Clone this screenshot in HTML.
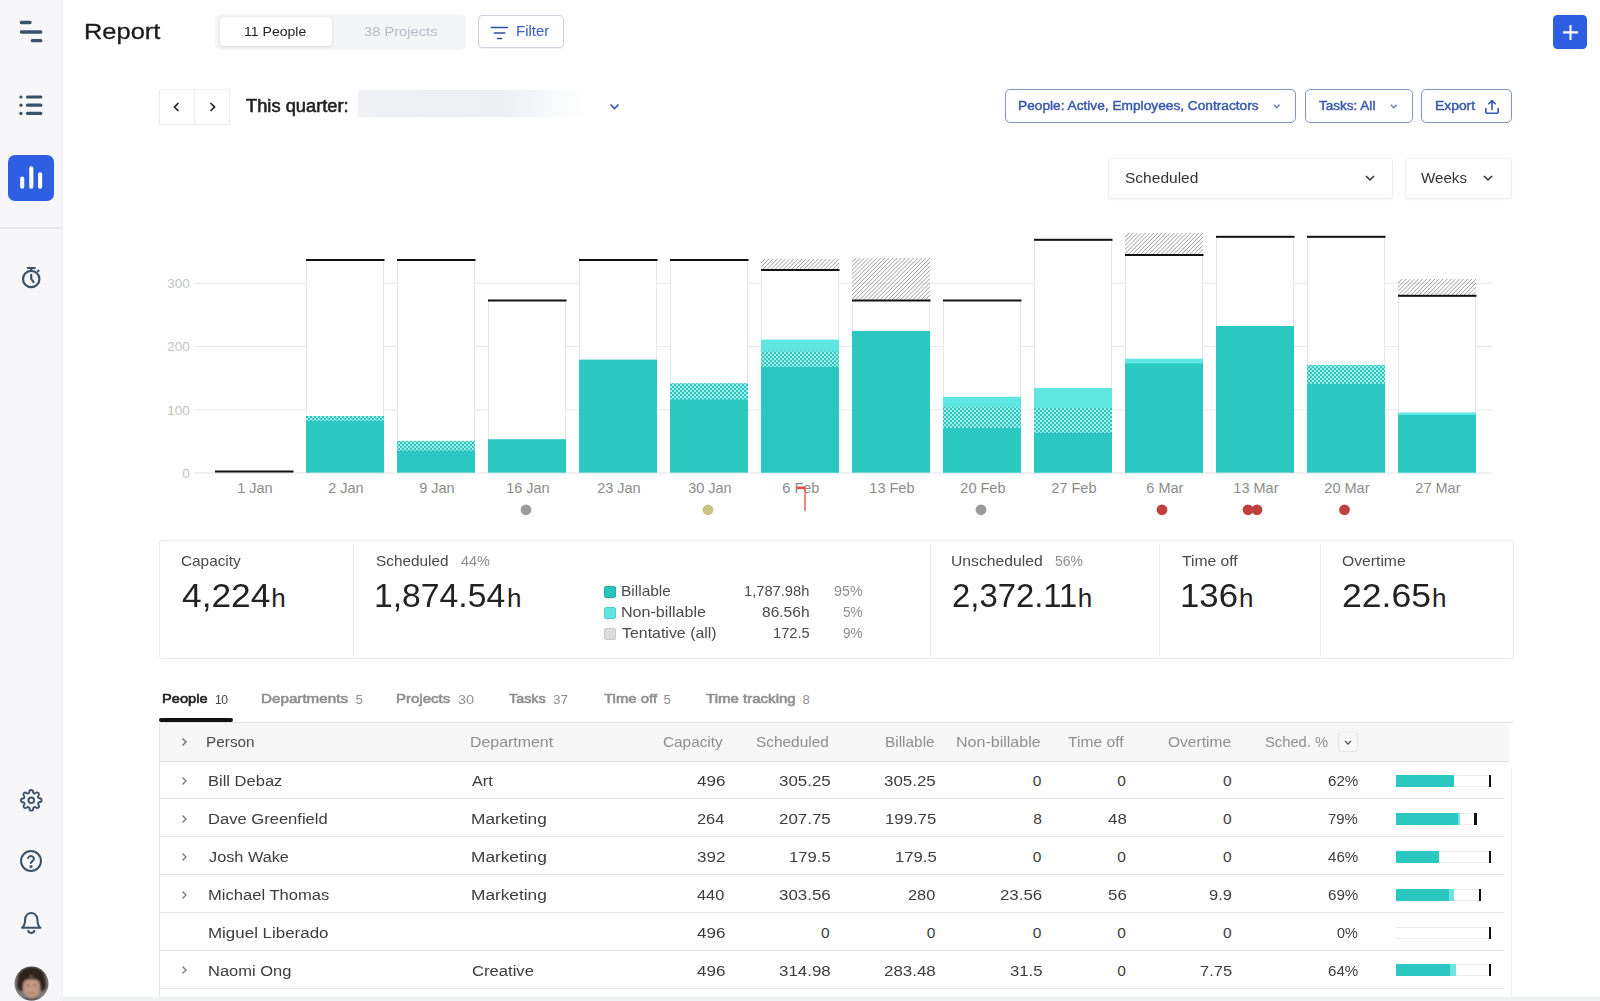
<!DOCTYPE html>
<html><head><meta charset="utf-8"><title>Report</title>
<style>
*{box-sizing:border-box;margin:0;padding:0}
html,body{width:1600px;height:1001px;overflow:hidden;background:#fff;font-family:"Liberation Sans",sans-serif;color:#222}
.abs{position:absolute}
.t{position:absolute;white-space:nowrap;font-family:"Liberation Sans",sans-serif}
#side{position:absolute;left:0;top:0;width:63px;height:1001px;background:#f7f7fa;border-right:1px solid #f0f1f3}
#side svg{position:absolute}
#bottom{position:absolute;left:62px;top:997px;width:1538px;height:4px;background:#f1f2f4}
.seg{position:absolute;left:215px;top:13.5px;width:251px;height:36.5px;background:#f4f5f7;border-radius:6px}
.seg .on{position:absolute;left:4.5px;top:3.5px;width:112px;height:29px;background:#fff;border-radius:4px;box-shadow:0 1px 3px rgba(0,0,0,.13)}
.btn{position:absolute;border:1px solid #8496c4;border-radius:5px;background:#fff}
.chart{position:absolute;left:0;top:220px}
.yl{font-size:13.5px;fill:#c2c2c2;font-family:"Liberation Sans",sans-serif}
.xl{font-size:14.5px;fill:#8c8c8c;font-family:"Liberation Sans",sans-serif}
.cards{position:absolute;left:159px;top:540px;width:1354.5px;height:118.5px;border:1px solid #e9e9e9;border-radius:3px;background:#fff}
.cards .dv{position:absolute;top:3px;width:1px;height:113px;background:#e9e9e9}
.sq{position:absolute;left:604px;width:12px;height:12px;border-radius:2px}
.thead{position:absolute;left:159px;top:722px;width:1350px;height:40px;background:#f7f7f7;border-top:1px solid #e2e2e2;border-bottom:1px solid #e2e2e2}
.rl{position:absolute;left:159px;width:1345px;height:1px;background:#e6e6e6}
.rchev{position:absolute;left:181px}
.pbar{position:absolute;left:1396px;height:12px;border-top:1px solid #ececec;border-bottom:1px solid #ececec}
.pbar i{position:absolute;top:-1px;height:12px;display:block}
.pbar .b{left:0;background:#2bc8c2}
.pbar .l{background:#6fe3de}
.pbar .m{width:2.4px;background:#111}
.tbl-l{position:absolute;left:159px;top:723px;width:1px;height:274px;background:#e8e8e8}
.tbl-r{position:absolute;left:1511px;top:768px;width:1px;height:229px;background:#efefef}
</style></head><body>
<div id="side">
<!-- logo -->
<svg style="left:19px;top:20px" width="26" height="24" viewBox="0 0 26 24"><g stroke="#3b5168" stroke-width="3.300" stroke-linecap="round"><path d="M2.400 2.500H11"/><path d="M2.400 12H21.800"/><path d="M13.300 20.700H21.800"/></g></svg>
<!-- list -->
<svg style="left:19px;top:93.800px" width="25" height="22" viewBox="0 0 25 22"><g stroke="#3b5168" stroke-width="3.200" stroke-linecap="round"><path d="M8.500 3H21.800"/><path d="M8.500 11.200H21.800"/><path d="M8.500 19.400H21.800"/><path d="M1.900 3H2"/><path d="M1.900 11.200H2"/><path d="M1.900 19.400H2"/></g></svg>
<!-- active -->
<div class="abs" style="left:8px;top:155px;width:46px;height:46px;border-radius:7px;background:#2e5fe2"></div>
<svg style="left:19px;top:165px" width="24" height="26" viewBox="0 0 24 26"><g stroke="#fff" stroke-width="4.100" stroke-linecap="round"><path d="M3.200 13.500V21.800"/><path d="M12.300 3.300V21.800"/><path d="M21.100 9.200V21.800"/></g></svg>
<div class="abs" style="left:0;top:227px;width:63px;height:2px;background:linear-gradient(#e3e5e8,#eceef0)"></div>
<!-- timer -->
<svg style="left:20px;top:266px" width="24" height="25" viewBox="0 0 24 25"><g fill="none" stroke="#3b5168" stroke-width="2.200" stroke-linecap="round"><circle cx="11.200" cy="13" r="8.200"/><path d="M7.800 2H14.800"/><path d="M11.200 2.500V4.500"/><path d="M17.900 5.300L18.500 4.700"/><path d="M11.200 8.800V13L13.600 16.200"/></g></svg>
<!-- gear -->
<svg style="left:20px;top:789px" width="22.500" height="22.500" viewBox="0 0 24 24" fill="none" stroke="#3b5168" stroke-width="2" stroke-linecap="round" stroke-linejoin="round"><circle cx="12" cy="12" r="3"/><path d="M19.4 15a1.65 1.65 0 0 0 .33 1.82l.06.06a2 2 0 1 1-2.83 2.83l-.06-.06a1.65 1.65 0 0 0-1.82-.33 1.65 1.65 0 0 0-1 1.51V21a2 2 0 0 1-4 0v-.09a1.65 1.65 0 0 0-1-1.51 1.65 1.65 0 0 0-1.82.33l-.06.06a2 2 0 1 1-2.83-2.83l.06-.06a1.65 1.65 0 0 0 .33-1.82 1.65 1.65 0 0 0-1.51-1H3a2 2 0 0 1 0-4h.09a1.65 1.65 0 0 0 1.51-1 1.65 1.65 0 0 0-.33-1.82l-.06-.06a2 2 0 1 1 2.83-2.83l.06.06a1.65 1.65 0 0 0 1.82.33h0a1.65 1.65 0 0 0 1-1.51V3a2 2 0 0 1 4 0v.09a1.65 1.65 0 0 0 1 1.51h0a1.65 1.65 0 0 0 1.82-.33l.06-.06a2 2 0 1 1 2.83 2.83l-.06.06a1.65 1.65 0 0 0-.33 1.82v0a1.65 1.65 0 0 0 1.510 1H21a2 2 0 0 1 0 4h-.09a1.65 1.65 0 0 0-1.510 1z"/></svg>
<!-- help -->
<svg style="left:19px;top:849px" width="24" height="24" viewBox="0 0 24 24" fill="none" stroke="#3b5168" stroke-width="2" stroke-linecap="round" stroke-linejoin="round"><circle cx="12" cy="12" r="10"/><path d="M9.1 9a3 3 0 0 1 5.8 1c0 2-3 2.6-3 4"/><circle cx="12" cy="17.6" r=".6" fill="#3b5168"/></svg>
<!-- bell -->
<svg style="left:18px;top:909.500px" width="26.500" height="25.500" viewBox="0 0 24 25" fill="none" stroke="#3b5168" stroke-width="2" stroke-linecap="round" stroke-linejoin="round"><path d="M18 9A6 6 0 0 0 6 9c0 6-3 8.500-3 8.500h18S18 15 18 9z"/><path d="M9 20.500a3.200 3.200 0 0 0 6 0"/></svg>
<!-- avatar -->
<svg style="left:14px;top:966px" width="35" height="35" viewBox="0 0 35 35"><defs><clipPath id="av"><circle cx="17.500" cy="17.500" r="17"/></clipPath></defs><filter id="bl"><feGaussianBlur stdDeviation="0.9"/></filter><g clip-path="url(#av)"><rect width="35" height="35" fill="#7f7c79"/><g filter="url(#bl)"><ellipse cx="17.500" cy="12" rx="13.500" ry="11" fill="#2e221c"/><ellipse cx="7" cy="18" rx="4" ry="7" fill="#2e221c"/><ellipse cx="28" cy="18" rx="4" ry="7" fill="#2e221c"/><ellipse cx="17.500" cy="21" rx="8.500" ry="11" fill="#c49a84"/><path d="M9 16Q12 9 17.500 11Q23 9 26 16Q22 12.500 17.500 13.500Q13 12.500 9 16z" fill="#2e221c"/><ellipse cx="14" cy="19.500" rx="1.300" ry=".8" fill="#3a2a22"/><ellipse cx="21" cy="19.500" rx="1.300" ry=".8" fill="#3a2a22"/><path d="M14 27Q17.500 28.500 21 27" stroke="#8a5a4a" stroke-width="1" fill="none"/><rect x="0" y="32" width="35" height="4" fill="#555"/></g></g></svg>
</div>
<div id="bottom"></div>

<div class="seg"><div class="on"></div></div>
<div class="btn" style="left:477.500px;top:15px;width:86.500px;height:32.500px;border-color:#cbcfd8;border-radius:4px;box-shadow:0 1px 1px rgba(0,0,0,.05)"><svg class="abs" style="left:11px;top:9.500px" width="19" height="15" viewBox="0 0 19 15"><g stroke="#2f4d9f" stroke-width="1.500" stroke-linecap="round"><path d="M1.300 1.500H17.500"/><path d="M4.300 7H14.800"/><path d="M7.500 12.500H11.600"/></g></svg></div>
<div class="abs" style="left:1553.400px;top:15px;width:33.800px;height:33.800px;border-radius:4.500px;background:#2e5fe2"><svg class="abs" style="left:8.500px;top:8.500px" width="17" height="17" viewBox="0 0 17 17"><path d="M8.500 1V16M1 8.400H16" stroke="#fff" stroke-width="2.100" stroke-linecap="butt"/></svg></div>

<!-- row 2 -->
<div class="abs" style="left:159px;top:88.500px;width:71px;height:36.500px;border:1px solid #e9eaec;border-top-color:#f1f2f3;border-radius:2px;background:#fff"></div>
<div class="abs" style="left:193.500px;top:89px;width:1px;height:36px;background:#ebecee"></div>
<svg class="abs" style="left:171.500px;top:100.500px" width="9" height="12" viewBox="0 0 9 12"><path d="M6.500 2L2.500 6L6.500 10" fill="none" stroke="#222" stroke-width="1.700"/></svg>
<svg class="abs" style="left:208px;top:100.500px" width="9" height="12" viewBox="0 0 9 12"><path d="M2.500 2L6.500 6L2.500 10" fill="none" stroke="#222" stroke-width="1.700"/></svg>
<div class="abs" style="left:357.500px;top:90px;width:230px;height:26.500px;background:linear-gradient(90deg,#eff1f5 0,#edeff3 62%,#f4f5f8 76%,#fafbfc 88%,#fff 100%)"></div>
<svg class="abs" style="left:609px;top:103px" width="11" height="8" viewBox="0 0 11 8"><path d="M1.500 1.500L5.500 5.500L9.500 1.500" fill="none" stroke="#3558b8" stroke-width="1.700"/></svg>

<div class="btn" style="left:1004.500px;top:89px;width:291px;height:33.500px"><svg class="abs" style="left:267.500px;top:14px" width="7.500" height="5" viewBox="0 0 9 6"><path d="M1 1L4.500 4.500L8 1" fill="none" stroke="#6d7fa8" stroke-width="1.700"/></svg></div>
<div class="btn" style="left:1304.500px;top:89px;width:108px;height:33.500px"><svg class="abs" style="left:84px;top:14px" width="7.500" height="5" viewBox="0 0 9 6"><path d="M1 1L4.500 4.500L8 1" fill="none" stroke="#6d7fa8" stroke-width="1.700"/></svg></div>
<div class="btn" style="left:1421px;top:89px;width:90.500px;height:33.500px"><svg class="abs" style="left:61.500px;top:8.500px" width="16" height="16" viewBox="0 0 16 16"><g fill="none" stroke="#3558b8" stroke-width="1.600" stroke-linecap="round" stroke-linejoin="round"><path d="M8 10.500V1.800M4.800 4.800L8 1.600L11.200 4.800"/><path d="M1.800 9.500V12.500Q1.800 14.200 3.500 14.200H12.500Q14.200 14.200 14.200 12.500V9.500"/></g></svg></div>

<!-- selects -->
<div class="abs" style="left:1108px;top:158px;width:284.500px;height:40.500px;border:1px solid #eeeeee;border-top-color:#f4f4f4;border-radius:3px;background:#fff;box-shadow:0 1px 2px rgba(0,0,0,.04)"><svg class="abs" style="left:255.500px;top:16px" width="10" height="7" viewBox="0 0 10 7"><path d="M1 1L5 5L9 1" fill="none" stroke="#333" stroke-width="1.500"/></svg></div>
<div class="abs" style="left:1404.500px;top:158px;width:107px;height:40.500px;border:1px solid #eeeeee;border-top-color:#f4f4f4;border-radius:3px;background:#fff;box-shadow:0 1px 2px rgba(0,0,0,.04)"><svg class="abs" style="left:77.500px;top:16px" width="10" height="7" viewBox="0 0 10 7"><path d="M1 1L5 5L9 1" fill="none" stroke="#333" stroke-width="1.500"/></svg></div>

<svg class="chart" width="1600" height="320" viewBox="0 220 1600 320">
<defs>
<pattern id="hatch" width="2.9" height="2.9" patternUnits="userSpaceOnUse" patternTransform="rotate(-45)"><rect width="2.9" height="2.9" fill="#fff"/><rect width="2.9" height="0.85" fill="#939393"/></pattern>
<pattern id="chk" width="4" height="4" patternUnits="userSpaceOnUse"><rect width="4" height="4" fill="#2bc8c2"/><rect width="2" height="2" fill="#a4ebe7"/><rect x="2" y="2" width="2" height="2" fill="#a4ebe7"/></pattern>
</defs>
<line x1="194" x2="1492" y1="283.3" y2="283.3" stroke="#e9e9e9" stroke-width="1"/>
<text x="189.8" y="288.1" text-anchor="end" class="yl">300</text>
<line x1="194" x2="1492" y1="346.5" y2="346.5" stroke="#e9e9e9" stroke-width="1"/>
<text x="189.8" y="351.3" text-anchor="end" class="yl">200</text>
<line x1="194" x2="1492" y1="409.8" y2="409.8" stroke="#e9e9e9" stroke-width="1"/>
<text x="189.8" y="414.6" text-anchor="end" class="yl">100</text>
<line x1="194" x2="1492" y1="473" y2="473" stroke="#dde1e5" stroke-width="1"/>
<text x="189.8" y="477.8" text-anchor="end" class="yl">0</text>
<rect x="215.0" y="470.5" width="78.5" height="2" fill="#111"/>
<text x="254.9" y="492.9" text-anchor="middle" class="xl">1 Jan</text>
<rect x="306.5" y="260" width="77" height="212.60000000000002" fill="#fff" stroke="#e6e6e6" stroke-width="1"/>
<rect x="306.0" y="416" width="78" height="5.5" fill="url(#chk)"/>
<rect x="306.0" y="421" width="78" height="51.60000000000002" fill="#2bc8c2"/>
<rect x="306.0" y="259" width="78.5" height="2" fill="#111"/>
<text x="345.9" y="492.9" text-anchor="middle" class="xl">2 Jan</text>
<rect x="397.5" y="260" width="77" height="212.60000000000002" fill="#fff" stroke="#e6e6e6" stroke-width="1"/>
<rect x="397.0" y="440.8" width="78" height="10.5" fill="url(#chk)"/>
<rect x="397.0" y="450.8" width="78" height="21.80000000000001" fill="#2bc8c2"/>
<rect x="397.0" y="259" width="78.5" height="2" fill="#111"/>
<text x="436.9" y="492.9" text-anchor="middle" class="xl">9 Jan</text>
<rect x="488.5" y="300.5" width="77" height="172.10000000000002" fill="#fff" stroke="#e6e6e6" stroke-width="1"/>
<rect x="488.0" y="439.2" width="78" height="33.400000000000034" fill="#2bc8c2"/>
<rect x="488.0" y="299.5" width="78.5" height="2" fill="#111"/>
<text x="527.9" y="492.9" text-anchor="middle" class="xl">16 Jan</text>
<rect x="579.5" y="260" width="77" height="212.60000000000002" fill="#fff" stroke="#e6e6e6" stroke-width="1"/>
<rect x="579.0" y="359.6" width="78" height="113.0" fill="#2bc8c2"/>
<rect x="579.0" y="259" width="78.5" height="2" fill="#111"/>
<text x="618.9" y="492.9" text-anchor="middle" class="xl">23 Jan</text>
<rect x="670.5" y="260" width="77" height="212.60000000000002" fill="#fff" stroke="#e6e6e6" stroke-width="1"/>
<rect x="670.0" y="383.2" width="78" height="16.80000000000001" fill="url(#chk)"/>
<rect x="670.0" y="399.5" width="78" height="73.10000000000002" fill="#2bc8c2"/>
<rect x="670.0" y="259" width="78.5" height="2" fill="#111"/>
<text x="709.9" y="492.9" text-anchor="middle" class="xl">30 Jan</text>
<rect x="761.5" y="270" width="77" height="202.60000000000002" fill="#fff" stroke="#e6e6e6" stroke-width="1"/>
<clipPath id="hc6"><rect x="761.0" y="258.8" width="78" height="11.199999999999989"/></clipPath>
<path clip-path="url(#hc6)" d="M745.80 270 L757.00 258.8 M749.90 270 L761.10 258.8 M754.00 270 L765.20 258.8 M758.10 270 L769.30 258.8 M762.20 270 L773.40 258.8 M766.30 270 L777.50 258.8 M770.40 270 L781.60 258.8 M774.50 270 L785.70 258.8 M778.60 270 L789.80 258.8 M782.70 270 L793.90 258.8 M786.80 270 L798.00 258.8 M790.90 270 L802.10 258.8 M795.00 270 L806.20 258.8 M799.10 270 L810.30 258.8 M803.20 270 L814.40 258.8 M807.30 270 L818.50 258.8 M811.40 270 L822.60 258.8 M815.50 270 L826.70 258.8 M819.60 270 L830.80 258.8 M823.70 270 L834.90 258.8 M827.80 270 L839.00 258.8 M831.90 270 L843.10 258.8 M836.00 270 L847.20 258.8 M840.10 270 L851.30 258.8" stroke="#8e8e8e" stroke-width="0.9" fill="none"/>
<rect x="761.0" y="339.6" width="78" height="133.0" fill="#5fe6e0"/>
<rect x="761.0" y="351.6" width="78" height="15.899999999999977" fill="url(#chk)"/>
<rect x="761.0" y="367" width="78" height="105.60000000000002" fill="#2bc8c2"/>
<rect x="761.0" y="269" width="78.5" height="2" fill="#111"/>
<text x="800.9" y="492.9" text-anchor="middle" class="xl">6 Feb</text>
<rect x="852.5" y="300.5" width="77" height="172.10000000000002" fill="#fff" stroke="#e6e6e6" stroke-width="1"/>
<clipPath id="hc7"><rect x="852.0" y="258" width="78" height="42.5"/></clipPath>
<path clip-path="url(#hc7)" d="M805.50 300.5 L848.00 258 M809.60 300.5 L852.10 258 M813.70 300.5 L856.20 258 M817.80 300.5 L860.30 258 M821.90 300.5 L864.40 258 M826.00 300.5 L868.50 258 M830.10 300.5 L872.60 258 M834.20 300.5 L876.70 258 M838.30 300.5 L880.80 258 M842.40 300.5 L884.90 258 M846.50 300.5 L889.00 258 M850.60 300.5 L893.10 258 M854.70 300.5 L897.20 258 M858.80 300.5 L901.30 258 M862.90 300.5 L905.40 258 M867.00 300.5 L909.50 258 M871.10 300.5 L913.60 258 M875.20 300.5 L917.70 258 M879.30 300.5 L921.80 258 M883.40 300.5 L925.90 258 M887.50 300.5 L930.00 258 M891.60 300.5 L934.10 258 M895.70 300.5 L938.20 258 M899.80 300.5 L942.30 258 M903.90 300.5 L946.40 258 M908.00 300.5 L950.50 258 M912.10 300.5 L954.60 258 M916.20 300.5 L958.70 258 M920.30 300.5 L962.80 258 M924.40 300.5 L966.90 258 M928.50 300.5 L971.00 258 M932.60 300.5 L975.10 258" stroke="#8e8e8e" stroke-width="0.9" fill="none"/>
<rect x="852.0" y="331" width="78" height="141.60000000000002" fill="#2bc8c2"/>
<rect x="852.0" y="299.5" width="78.5" height="2" fill="#111"/>
<text x="891.9" y="492.9" text-anchor="middle" class="xl">13 Feb</text>
<rect x="943.5" y="300.5" width="77" height="172.10000000000002" fill="#fff" stroke="#e6e6e6" stroke-width="1"/>
<rect x="943.0" y="396.8" width="78" height="75.80000000000001" fill="#5fe6e0"/>
<rect x="943.0" y="407.2" width="78" height="21.30000000000001" fill="url(#chk)"/>
<rect x="943.0" y="428" width="78" height="44.60000000000002" fill="#2bc8c2"/>
<rect x="943.0" y="299.5" width="78.5" height="2" fill="#111"/>
<text x="982.9" y="492.9" text-anchor="middle" class="xl">20 Feb</text>
<rect x="1034.5" y="239.8" width="77" height="232.8" fill="#fff" stroke="#e6e6e6" stroke-width="1"/>
<rect x="1034.0" y="388" width="78" height="84.60000000000002" fill="#5fe6e0"/>
<rect x="1034.0" y="408" width="78" height="25.5" fill="url(#chk)"/>
<rect x="1034.0" y="433" width="78" height="39.60000000000002" fill="#2bc8c2"/>
<rect x="1034.0" y="238.8" width="78.5" height="2" fill="#111"/>
<text x="1073.9" y="492.9" text-anchor="middle" class="xl">27 Feb</text>
<rect x="1125.5" y="255" width="77" height="217.60000000000002" fill="#fff" stroke="#e6e6e6" stroke-width="1"/>
<clipPath id="hc10"><rect x="1125.0" y="233" width="78" height="22"/></clipPath>
<path clip-path="url(#hc10)" d="M1099.00 255 L1121.00 233 M1103.10 255 L1125.10 233 M1107.20 255 L1129.20 233 M1111.30 255 L1133.30 233 M1115.40 255 L1137.40 233 M1119.50 255 L1141.50 233 M1123.60 255 L1145.60 233 M1127.70 255 L1149.70 233 M1131.80 255 L1153.80 233 M1135.90 255 L1157.90 233 M1140.00 255 L1162.00 233 M1144.10 255 L1166.10 233 M1148.20 255 L1170.20 233 M1152.30 255 L1174.30 233 M1156.40 255 L1178.40 233 M1160.50 255 L1182.50 233 M1164.60 255 L1186.60 233 M1168.70 255 L1190.70 233 M1172.80 255 L1194.80 233 M1176.90 255 L1198.90 233 M1181.00 255 L1203.00 233 M1185.10 255 L1207.10 233 M1189.20 255 L1211.20 233 M1193.30 255 L1215.30 233 M1197.40 255 L1219.40 233 M1201.50 255 L1223.50 233 M1205.60 255 L1227.60 233" stroke="#8e8e8e" stroke-width="0.9" fill="none"/>
<rect x="1125.0" y="358.7" width="78" height="113.90000000000003" fill="#5fe6e0"/>
<rect x="1125.0" y="363.5" width="78" height="109.10000000000002" fill="#2bc8c2"/>
<rect x="1125.0" y="254" width="78.5" height="2" fill="#111"/>
<text x="1164.9" y="492.9" text-anchor="middle" class="xl">6 Mar</text>
<rect x="1216.5" y="236.8" width="77" height="235.8" fill="#fff" stroke="#e6e6e6" stroke-width="1"/>
<rect x="1216.0" y="326" width="78" height="146.60000000000002" fill="#2bc8c2"/>
<rect x="1216.0" y="235.8" width="78.5" height="2" fill="#111"/>
<text x="1255.9" y="492.9" text-anchor="middle" class="xl">13 Mar</text>
<rect x="1307.5" y="236.8" width="77" height="235.8" fill="#fff" stroke="#e6e6e6" stroke-width="1"/>
<rect x="1307.0" y="364.8" width="78" height="19.69999999999999" fill="url(#chk)"/>
<rect x="1307.0" y="384" width="78" height="88.60000000000002" fill="#2bc8c2"/>
<rect x="1307.0" y="235.8" width="78.5" height="2" fill="#111"/>
<text x="1346.9" y="492.9" text-anchor="middle" class="xl">20 Mar</text>
<rect x="1398.5" y="295.8" width="77" height="176.8" fill="#fff" stroke="#e6e6e6" stroke-width="1"/>
<clipPath id="hc13"><rect x="1398.0" y="279" width="78" height="16.80000000000001"/></clipPath>
<path clip-path="url(#hc13)" d="M1377.20 295.8 L1394.00 279 M1381.30 295.8 L1398.10 279 M1385.40 295.8 L1402.20 279 M1389.50 295.8 L1406.30 279 M1393.60 295.8 L1410.40 279 M1397.70 295.8 L1414.50 279 M1401.80 295.8 L1418.60 279 M1405.90 295.8 L1422.70 279 M1410.00 295.8 L1426.80 279 M1414.10 295.8 L1430.90 279 M1418.20 295.8 L1435.00 279 M1422.30 295.8 L1439.10 279 M1426.40 295.8 L1443.20 279 M1430.50 295.8 L1447.30 279 M1434.60 295.8 L1451.40 279 M1438.70 295.8 L1455.50 279 M1442.80 295.8 L1459.60 279 M1446.90 295.8 L1463.70 279 M1451.00 295.8 L1467.80 279 M1455.10 295.8 L1471.90 279 M1459.20 295.8 L1476.00 279 M1463.30 295.8 L1480.10 279 M1467.40 295.8 L1484.20 279 M1471.50 295.8 L1488.30 279 M1475.60 295.8 L1492.40 279 M1479.70 295.8 L1496.50 279" stroke="#8e8e8e" stroke-width="0.9" fill="none"/>
<rect x="1398.0" y="412.5" width="78" height="60.10000000000002" fill="#5fe6e0"/>
<rect x="1398.0" y="415" width="78" height="57.60000000000002" fill="#2bc8c2"/>
<rect x="1398.0" y="294.8" width="78.5" height="2" fill="#111"/>
<text x="1437.9" y="492.9" text-anchor="middle" class="xl">27 Mar</text>
<circle cx="526" cy="509.8" r="5.4" fill="#9b9b9b"/>
<circle cx="708" cy="509.8" r="5.4" fill="#c9c383"/>
<circle cx="981" cy="509.8" r="5.4" fill="#9b9b9b"/>
<circle cx="1162" cy="509.8" r="5.4" fill="#c0403e"/>
<circle cx="1248" cy="509.8" r="5.4" fill="#c0403e"/>
<circle cx="1257" cy="509.8" r="5.4" fill="#c0403e"/>
<circle cx="1344.5" cy="509.8" r="5.4" fill="#c0403e"/>
<path d="M805 486.6 V511" stroke="#e4564f" stroke-width="1.4" fill="none"/><rect x="796.6" y="486.5" width="8.4" height="2.5" fill="#e0504a"/>
</svg>

<!-- cards -->
<div class="cards"><div class="dv" style="left:193px"></div><div class="dv" style="left:769.500px"></div><div class="dv" style="left:998.500px"></div><div class="dv" style="left:1159.500px"></div></div>
<div class="sq" style="top:586px;background:#2bc4be;border:1px solid #26aaa5"></div>
<div class="sq" style="top:607px;background:#62e6e0;border:1px solid #52cfc9"></div>
<div class="sq" style="top:628px;background:repeating-conic-gradient(#d6d6d6 0 25%,#e6e6e6 0 50%) 0 0/3px 3px;border:1px solid #c9c9c9"></div>

<!-- tabs -->
<div class="abs" style="left:159px;top:722px;width:1354px;height:1px;background:#e2e2e2"></div>
<div class="abs" style="left:159px;top:718px;width:73.500px;height:3.800px;background:#111;border-radius:2px"></div>

<!-- table -->
<div class="thead"></div>
<svg class="abs" style="left:181px;top:737px" width="7" height="10" viewBox="0 0 7 10"><path d="M1.500 1.500L5 5L1.500 8.500" fill="none" stroke="#666" stroke-width="1.300"/></svg>
<div class="abs" style="left:1338px;top:732px;width:19.500px;height:19.500px;border:1px solid #e6e6e6;border-top-color:#f1f1f1;border-radius:3px;background:#f8f8f8"><svg class="abs" style="left:5px;top:6.500px" width="8" height="6" viewBox="0 0 8 6"><path d="M1 1L4 4L7 1" fill="none" stroke="#555" stroke-width="1.300"/></svg></div>
<svg class="rchev" style="top:775.9px" width="7" height="10" viewBox="0 0 7 10"><path d="M1.5 1.5L5 5L1.5 8.5" fill="none" stroke="#777" stroke-width="1.3"/></svg>
<div class="rl" style="top:798.0px"></div>
<span class="pbar" style="top:774.9px;width:94.2px"><i class="b" style="width:58.4px"></i><i class="l" style="left:58.4px;width:0px"></i><i class="m" style="left:93.0px"></i></span>
<svg class="rchev" style="top:813.8px" width="7" height="10" viewBox="0 0 7 10"><path d="M1.5 1.5L5 5L1.5 8.5" fill="none" stroke="#777" stroke-width="1.3"/></svg>
<div class="rl" style="top:836.0px"></div>
<span class="pbar" style="top:812.8px;width:79.4px"><i class="b" style="width:61.6px"></i><i class="l" style="left:61.6px;width:2.2px"></i><i class="m" style="left:78.2px"></i></span>
<svg class="rchev" style="top:851.7px" width="7" height="10" viewBox="0 0 7 10"><path d="M1.5 1.5L5 5L1.5 8.5" fill="none" stroke="#777" stroke-width="1.3"/></svg>
<div class="rl" style="top:874.0px"></div>
<span class="pbar" style="top:850.7px;width:94.2px"><i class="b" style="width:43px"></i><i class="l" style="left:43px;width:0px"></i><i class="m" style="left:93.0px"></i></span>
<svg class="rchev" style="top:889.6px" width="7" height="10" viewBox="0 0 7 10"><path d="M1.5 1.5L5 5L1.5 8.5" fill="none" stroke="#777" stroke-width="1.3"/></svg>
<div class="rl" style="top:912.0px"></div>
<span class="pbar" style="top:888.6px;width:84px"><i class="b" style="width:53px"></i><i class="l" style="left:53px;width:5px"></i><i class="m" style="left:82.8px"></i></span>
<div class="rl" style="top:950.0px"></div>
<span class="pbar" style="top:926.5px;width:94.2px"><i class="b" style="width:0px"></i><i class="l" style="left:0px;width:0px"></i><i class="m" style="left:93.0px"></i></span>
<svg class="rchev" style="top:965.4px" width="7" height="10" viewBox="0 0 7 10"><path d="M1.5 1.5L5 5L1.5 8.5" fill="none" stroke="#777" stroke-width="1.3"/></svg>
<div class="rl" style="top:988.0px"></div>
<span class="pbar" style="top:964.4px;width:94.2px"><i class="b" style="width:54px"></i><i class="l" style="left:54px;width:6px"></i><i class="m" style="left:93.0px"></i></span>
<div class="tbl-l"></div><div class="tbl-r"></div>
<span class="t" style="left:84.35px;top:21.01px;font-size:22.2px;line-height:22.2px;letter-spacing:0.000px;color:#1a1a1a;-webkit-text-stroke:0.3px #1a1a1a;transform:scaleX(1.1463);transform-origin:0 0">Report</span>
<span class="t" style="left:243.96px;top:24.82px;font-size:13.5px;line-height:13.5px;letter-spacing:0.000px;color:#222;transform:scaleX(1.0422);transform-origin:0 0">11 People</span>
<span class="t" style="left:363.75px;top:24.82px;font-size:13.5px;line-height:13.5px;letter-spacing:0.000px;color:#b6bac2;transform:scaleX(1.0880);transform-origin:0 0">38 Projects</span>
<span class="t" style="left:516.43px;top:24.40px;font-size:14px;line-height:14px;letter-spacing:0.000px;color:#3b5bbd;transform:scaleX(1.0674);transform-origin:0 0">Filter</span>
<span class="t" style="left:246.25px;top:97.69px;font-size:17.5px;line-height:17.5px;letter-spacing:0.000px;color:#222;-webkit-text-stroke:0.55px #222;transform:scaleX(1.0450);transform-origin:0 0">This quarter:</span>
<span class="t" style="left:1017.76px;top:99.23px;font-size:13.2px;line-height:13.2px;letter-spacing:0.000px;color:#3a59ab;-webkit-text-stroke:0.45px #3a59ab;transform:scaleX(1.0390);transform-origin:0 0">People: Active, Employees, Contractors</span>
<span class="t" style="left:1319.20px;top:99.23px;font-size:13.2px;line-height:13.2px;letter-spacing:0.000px;color:#3a59ab;-webkit-text-stroke:0.45px #3a59ab;transform:scaleX(1.0258);transform-origin:0 0">Tasks: All</span>
<span class="t" style="left:1434.55px;top:99.23px;font-size:13.2px;line-height:13.2px;letter-spacing:0.000px;color:#3a59ab;-webkit-text-stroke:0.45px #3a59ab;transform:scaleX(1.0521);transform-origin:0 0">Export</span>
<span class="t" style="left:1125.00px;top:170.30px;font-size:15px;line-height:15px;letter-spacing:0.000px;color:#333;transform:scaleX(1.0347);transform-origin:0 0">Scheduled</span>
<span class="t" style="left:1421.00px;top:170.30px;font-size:15px;line-height:15px;letter-spacing:-0.000px;color:#333;transform:scaleX(1.0095);transform-origin:0 0">Weeks</span>
<span class="t" style="left:181.00px;top:553.98px;font-size:14.5px;line-height:14.5px;letter-spacing:-0.000px;color:#4a4a4a;transform:scaleX(1.0584);transform-origin:0 0">Capacity</span>
<span class="t" style="left:181.50px;top:579.07px;font-size:33px;line-height:33px;letter-spacing:0.000px;color:#222;transform:scaleX(1.0702);transform-origin:0 0">4,224</span>
<span class="t" style="left:271.25px;top:584.99px;font-size:26px;line-height:26px;letter-spacing:0.000px;color:#222">h</span>
<span class="t" style="left:375.75px;top:553.98px;font-size:14.5px;line-height:14.5px;letter-spacing:0.000px;color:#4a4a4a;transform:scaleX(1.0590);transform-origin:0 0">Scheduled</span>
<span class="t" style="left:460.50px;top:553.98px;font-size:14.5px;line-height:14.5px;letter-spacing:0.000px;color:#8e8e8e;transform:scaleX(0.9956);transform-origin:0 0">44%</span>
<span class="t" style="left:374.21px;top:579.07px;font-size:33px;line-height:33px;letter-spacing:0.000px;color:#222;transform:scaleX(1.0210);transform-origin:0 0">1,874.54</span>
<span class="t" style="left:507.12px;top:584.99px;font-size:26px;line-height:26px;letter-spacing:0.000px;color:#222">h</span>
<span class="t" style="left:950.92px;top:553.98px;font-size:14.5px;line-height:14.5px;letter-spacing:0.000px;color:#4a4a4a;transform:scaleX(1.0828);transform-origin:0 0">Unscheduled</span>
<span class="t" style="left:1055.00px;top:553.98px;font-size:14.5px;line-height:14.5px;letter-spacing:0.000px;color:#8e8e8e;transform:scaleX(0.9613);transform-origin:0 0">56%</span>
<span class="t" style="left:951.51px;top:579.07px;font-size:33px;line-height:33px;letter-spacing:0.000px;color:#222;transform:scaleX(0.9947);transform-origin:0 0">2,372.11</span>
<span class="t" style="left:1077.75px;top:584.99px;font-size:26px;line-height:26px;letter-spacing:0.000px;color:#222">h</span>
<span class="t" style="left:1181.50px;top:553.98px;font-size:14.5px;line-height:14.5px;letter-spacing:0.000px;color:#4a4a4a;transform:scaleX(1.0801);transform-origin:0 0">Time off</span>
<span class="t" style="left:1180.39px;top:579.07px;font-size:33px;line-height:33px;letter-spacing:0.000px;color:#222;transform:scaleX(1.0540);transform-origin:0 0">136</span>
<span class="t" style="left:1238.88px;top:584.99px;font-size:26px;line-height:26px;letter-spacing:0.000px;color:#222">h</span>
<span class="t" style="left:1342.00px;top:553.98px;font-size:14.5px;line-height:14.5px;letter-spacing:-0.000px;color:#4a4a4a;transform:scaleX(1.0826);transform-origin:0 0">Overtime</span>
<span class="t" style="left:1342.12px;top:579.07px;font-size:33px;line-height:33px;letter-spacing:0.000px;color:#222;transform:scaleX(1.0769);transform-origin:0 0">22.65</span>
<span class="t" style="left:1432.00px;top:584.99px;font-size:26px;line-height:26px;letter-spacing:0.000px;color:#222">h</span>
<span class="t" style="left:620.93px;top:583.93px;font-size:14.5px;line-height:14.5px;letter-spacing:0.000px;color:#4a4a4a;transform:scaleX(1.0671);transform-origin:0 0">Billable</span>
<span class="t" style="left:743.99px;top:583.93px;font-size:14.5px;line-height:14.5px;letter-spacing:-0.000px;color:#4a4a4a;transform:scaleX(1.0127);transform-origin:0 0">1,787.98h</span>
<span class="t" style="left:833.50px;top:583.93px;font-size:14.5px;line-height:14.5px;letter-spacing:0.000px;color:#8e8e8e;transform:scaleX(0.9870);transform-origin:0 0">95%</span>
<span class="t" style="left:620.89px;top:604.93px;font-size:14.5px;line-height:14.5px;letter-spacing:0.000px;color:#4a4a4a;transform:scaleX(1.1092);transform-origin:0 0">Non-billable</span>
<span class="t" style="left:761.75px;top:604.93px;font-size:14.5px;line-height:14.5px;letter-spacing:0.000px;color:#4a4a4a;transform:scaleX(1.0726);transform-origin:0 0">86.56h</span>
<span class="t" style="left:842.50px;top:604.93px;font-size:14.5px;line-height:14.5px;letter-spacing:0.000px;color:#8e8e8e;transform:scaleX(0.9376);transform-origin:0 0">5%</span>
<span class="t" style="left:622.00px;top:625.93px;font-size:14.5px;line-height:14.5px;letter-spacing:-0.000px;color:#4a4a4a;transform:scaleX(1.0978);transform-origin:0 0">Tentative (all)</span>
<span class="t" style="left:772.74px;top:625.93px;font-size:14.5px;line-height:14.5px;letter-spacing:0.000px;color:#4a4a4a;transform:scaleX(1.0079);transform-origin:0 0">172.5</span>
<span class="t" style="left:842.50px;top:625.93px;font-size:14.5px;line-height:14.5px;letter-spacing:0.000px;color:#8e8e8e;transform:scaleX(0.9376);transform-origin:0 0">9%</span>
<span class="t" style="left:161.90px;top:692.49px;font-size:13.3px;line-height:13.3px;letter-spacing:0.000px;color:#222;-webkit-text-stroke:0.6px #222;transform:scaleX(1.0998);transform-origin:0 0">People</span>
<span class="t" style="left:214.50px;top:692.75px;font-size:13px;line-height:13px;letter-spacing:-0.520px;color:#444;transform:scaleX(0.9300);transform-origin:0 0">10</span>
<span class="t" style="left:261.36px;top:692.49px;font-size:13.3px;line-height:13.3px;letter-spacing:0.000px;color:#8f8f8f;-webkit-text-stroke:0.6px #8f8f8f;transform:scaleX(1.1428);transform-origin:0 0">Departments</span>
<span class="t" style="left:355.38px;top:692.75px;font-size:13px;line-height:13px;letter-spacing:0.000px;color:#8f8f8f">5</span>
<span class="t" style="left:396.12px;top:692.49px;font-size:13.3px;line-height:13.3px;letter-spacing:0.000px;color:#8f8f8f;-webkit-text-stroke:0.6px #8f8f8f;transform:scaleX(1.1291);transform-origin:0 0">Projects</span>
<span class="t" style="left:457.50px;top:692.75px;font-size:13px;line-height:13px;letter-spacing:-0.000px;color:#8f8f8f;transform:scaleX(1.1068);transform-origin:0 0">30</span>
<span class="t" style="left:508.75px;top:692.49px;font-size:13.3px;line-height:13.3px;letter-spacing:0.000px;color:#8f8f8f;-webkit-text-stroke:0.6px #8f8f8f;transform:scaleX(1.0775);transform-origin:0 0">Tasks</span>
<span class="t" style="left:553.00px;top:692.75px;font-size:13px;line-height:13px;letter-spacing:0.000px;color:#8f8f8f;transform:scaleX(1.0365);transform-origin:0 0">37</span>
<span class="t" style="left:603.50px;top:692.49px;font-size:13.3px;line-height:13.3px;letter-spacing:0.000px;color:#8f8f8f;-webkit-text-stroke:0.6px #8f8f8f;transform:scaleX(1.1240);transform-origin:0 0">Time off</span>
<span class="t" style="left:663.62px;top:692.75px;font-size:13px;line-height:13px;letter-spacing:0.000px;color:#8f8f8f">5</span>
<span class="t" style="left:706.25px;top:692.49px;font-size:13.3px;line-height:13.3px;letter-spacing:0.000px;color:#8f8f8f;-webkit-text-stroke:0.6px #8f8f8f;transform:scaleX(1.1310);transform-origin:0 0">Time tracking</span>
<span class="t" style="left:802.50px;top:692.75px;font-size:13px;line-height:13px;letter-spacing:0.000px;color:#8f8f8f">8</span>
<span class="t" style="left:206.44px;top:734.63px;font-size:14.5px;line-height:14.5px;letter-spacing:0.000px;color:#4a4a4a;transform:scaleX(1.0584);transform-origin:0 0">Person</span>
<span class="t" style="left:469.65px;top:734.63px;font-size:14.5px;line-height:14.5px;letter-spacing:0.000px;color:#8e8e8e;transform:scaleX(1.0973);transform-origin:0 0">Department</span>
<span class="t" style="left:662.50px;top:734.63px;font-size:14.5px;line-height:14.5px;letter-spacing:-0.000px;color:#8e8e8e;transform:scaleX(1.0584);transform-origin:0 0">Capacity</span>
<span class="t" style="left:756.00px;top:734.63px;font-size:14.5px;line-height:14.5px;letter-spacing:0.000px;color:#8e8e8e;transform:scaleX(1.0626);transform-origin:0 0">Scheduled</span>
<span class="t" style="left:885.19px;top:734.63px;font-size:14.5px;line-height:14.5px;letter-spacing:0.000px;color:#8e8e8e;transform:scaleX(1.0616);transform-origin:0 0">Billable</span>
<span class="t" style="left:955.89px;top:734.63px;font-size:14.5px;line-height:14.5px;letter-spacing:0.000px;color:#8e8e8e;transform:scaleX(1.1059);transform-origin:0 0">Non-billable</span>
<span class="t" style="left:1068.25px;top:734.63px;font-size:14.5px;line-height:14.5px;letter-spacing:0.000px;color:#8e8e8e;transform:scaleX(1.0801);transform-origin:0 0">Time off</span>
<span class="t" style="left:1167.75px;top:734.63px;font-size:14.5px;line-height:14.5px;letter-spacing:0.000px;color:#8e8e8e;transform:scaleX(1.0723);transform-origin:0 0">Overtime</span>
<span class="t" style="left:1264.80px;top:734.63px;font-size:14.5px;line-height:14.5px;letter-spacing:0.000px;color:#8e8e8e;transform:scaleX(1.0165);transform-origin:0 0">Sched. %</span>
<span class="t" style="left:207.68px;top:773.08px;font-size:15.5px;line-height:15.5px;letter-spacing:0.000px;color:#3d3d3d;transform:scaleX(1.0657);transform-origin:0 0">Bill Debaz</span>
<span class="t" style="left:471.75px;top:773.08px;font-size:15.5px;line-height:15.5px;letter-spacing:0.000px;color:#3d3d3d;transform:scaleX(1.0488);transform-origin:0 0">Art</span>
<span class="t" style="left:696.55px;top:773.08px;font-size:15.5px;line-height:15.5px;letter-spacing:0.000px;color:#3d3d3d;transform:scaleX(1.0974);transform-origin:0 0">496</span>
<span class="t" style="left:778.65px;top:773.08px;font-size:15.5px;line-height:15.5px;letter-spacing:0.000px;color:#3d3d3d;transform:scaleX(1.0922);transform-origin:0 0">305.25</span>
<span class="t" style="left:884.40px;top:773.08px;font-size:15.5px;line-height:15.5px;letter-spacing:0.000px;color:#3d3d3d;transform:scaleX(1.0922);transform-origin:0 0">305.25</span>
<span class="t" style="left:1032.75px;top:773.08px;font-size:15.5px;line-height:15.5px;letter-spacing:0.000px;color:#3d3d3d">0</span>
<span class="t" style="left:1117.25px;top:773.08px;font-size:15.5px;line-height:15.5px;letter-spacing:0.000px;color:#3d3d3d">0</span>
<span class="t" style="left:1223.00px;top:773.08px;font-size:15.5px;line-height:15.5px;letter-spacing:0.000px;color:#3d3d3d">0</span>
<span class="t" style="left:1327.50px;top:773.08px;font-size:15.5px;line-height:15.5px;letter-spacing:0.000px;color:#3d3d3d;transform:scaleX(0.9763);transform-origin:0 0">62%</span>
<span class="t" style="left:207.68px;top:810.98px;font-size:15.5px;line-height:15.5px;letter-spacing:0.000px;color:#3d3d3d;transform:scaleX(1.0690);transform-origin:0 0">Dave Greenfield</span>
<span class="t" style="left:470.64px;top:810.98px;font-size:15.5px;line-height:15.5px;letter-spacing:0.000px;color:#3d3d3d;transform:scaleX(1.1139);transform-origin:0 0">Marketing</span>
<span class="t" style="left:696.55px;top:810.98px;font-size:15.5px;line-height:15.5px;letter-spacing:0.000px;color:#3d3d3d;transform:scaleX(1.0556);transform-origin:0 0">264</span>
<span class="t" style="left:778.65px;top:810.98px;font-size:15.5px;line-height:15.5px;letter-spacing:0.000px;color:#3d3d3d;transform:scaleX(1.0922);transform-origin:0 0">207.75</span>
<span class="t" style="left:884.92px;top:810.98px;font-size:15.5px;line-height:15.5px;letter-spacing:0.000px;color:#3d3d3d;transform:scaleX(1.0811);transform-origin:0 0">199.75</span>
<span class="t" style="left:1033.25px;top:810.98px;font-size:15.5px;line-height:15.5px;letter-spacing:0.000px;color:#3d3d3d">8</span>
<span class="t" style="left:1107.90px;top:810.98px;font-size:15.5px;line-height:15.5px;letter-spacing:0.000px;color:#3d3d3d;transform:scaleX(1.0890);transform-origin:0 0">48</span>
<span class="t" style="left:1223.00px;top:810.98px;font-size:15.5px;line-height:15.5px;letter-spacing:0.000px;color:#3d3d3d">0</span>
<span class="t" style="left:1328.00px;top:810.98px;font-size:15.5px;line-height:15.5px;letter-spacing:0.000px;color:#3d3d3d;transform:scaleX(0.9603);transform-origin:0 0">79%</span>
<span class="t" style="left:208.75px;top:848.88px;font-size:15.5px;line-height:15.5px;letter-spacing:0.000px;color:#3d3d3d;transform:scaleX(1.0501);transform-origin:0 0">Josh Wake</span>
<span class="t" style="left:470.64px;top:848.88px;font-size:15.5px;line-height:15.5px;letter-spacing:0.000px;color:#3d3d3d;transform:scaleX(1.1139);transform-origin:0 0">Marketing</span>
<span class="t" style="left:696.55px;top:848.88px;font-size:15.5px;line-height:15.5px;letter-spacing:0.000px;color:#3d3d3d;transform:scaleX(1.0974);transform-origin:0 0">392</span>
<span class="t" style="left:788.78px;top:848.88px;font-size:15.5px;line-height:15.5px;letter-spacing:0.000px;color:#3d3d3d;transform:scaleX(1.0735);transform-origin:0 0">179.5</span>
<span class="t" style="left:894.53px;top:848.88px;font-size:15.5px;line-height:15.5px;letter-spacing:0.000px;color:#3d3d3d;transform:scaleX(1.0735);transform-origin:0 0">179.5</span>
<span class="t" style="left:1032.75px;top:848.88px;font-size:15.5px;line-height:15.5px;letter-spacing:0.000px;color:#3d3d3d">0</span>
<span class="t" style="left:1117.25px;top:848.88px;font-size:15.5px;line-height:15.5px;letter-spacing:0.000px;color:#3d3d3d">0</span>
<span class="t" style="left:1223.00px;top:848.88px;font-size:15.5px;line-height:15.5px;letter-spacing:0.000px;color:#3d3d3d">0</span>
<span class="t" style="left:1327.50px;top:848.88px;font-size:15.5px;line-height:15.5px;letter-spacing:0.000px;color:#3d3d3d;transform:scaleX(0.9763);transform-origin:0 0">46%</span>
<span class="t" style="left:207.68px;top:886.78px;font-size:15.5px;line-height:15.5px;letter-spacing:0.000px;color:#3d3d3d;transform:scaleX(1.0690);transform-origin:0 0">Michael Thomas</span>
<span class="t" style="left:470.64px;top:886.78px;font-size:15.5px;line-height:15.5px;letter-spacing:0.000px;color:#3d3d3d;transform:scaleX(1.1139);transform-origin:0 0">Marketing</span>
<span class="t" style="left:696.55px;top:886.78px;font-size:15.5px;line-height:15.5px;letter-spacing:0.000px;color:#3d3d3d;transform:scaleX(1.0556);transform-origin:0 0">440</span>
<span class="t" style="left:778.65px;top:886.78px;font-size:15.5px;line-height:15.5px;letter-spacing:0.000px;color:#3d3d3d;transform:scaleX(1.0922);transform-origin:0 0">303.56</span>
<span class="t" style="left:907.80px;top:886.78px;font-size:15.5px;line-height:15.5px;letter-spacing:0.000px;color:#3d3d3d;transform:scaleX(1.0556);transform-origin:0 0">280</span>
<span class="t" style="left:1000.00px;top:886.78px;font-size:15.5px;line-height:15.5px;letter-spacing:0.000px;color:#3d3d3d;transform:scaleX(1.0873);transform-origin:0 0">23.56</span>
<span class="t" style="left:1107.90px;top:886.78px;font-size:15.5px;line-height:15.5px;letter-spacing:0.000px;color:#3d3d3d;transform:scaleX(1.0890);transform-origin:0 0">56</span>
<span class="t" style="left:1209.45px;top:886.78px;font-size:15.5px;line-height:15.5px;letter-spacing:0.000px;color:#3d3d3d;transform:scaleX(1.0656);transform-origin:0 0">9.9</span>
<span class="t" style="left:1327.50px;top:886.78px;font-size:15.5px;line-height:15.5px;letter-spacing:0.000px;color:#3d3d3d;transform:scaleX(0.9763);transform-origin:0 0">69%</span>
<span class="t" style="left:207.66px;top:924.68px;font-size:15.5px;line-height:15.5px;letter-spacing:0.000px;color:#3d3d3d;transform:scaleX(1.0927);transform-origin:0 0">Miguel Liberado</span>
<span class="t" style="left:696.55px;top:924.68px;font-size:15.5px;line-height:15.5px;letter-spacing:0.000px;color:#3d3d3d;transform:scaleX(1.0974);transform-origin:0 0">496</span>
<span class="t" style="left:821.00px;top:924.68px;font-size:15.5px;line-height:15.5px;letter-spacing:0.000px;color:#3d3d3d">0</span>
<span class="t" style="left:926.75px;top:924.68px;font-size:15.5px;line-height:15.5px;letter-spacing:0.000px;color:#3d3d3d">0</span>
<span class="t" style="left:1032.75px;top:924.68px;font-size:15.5px;line-height:15.5px;letter-spacing:0.000px;color:#3d3d3d">0</span>
<span class="t" style="left:1117.25px;top:924.68px;font-size:15.5px;line-height:15.5px;letter-spacing:0.000px;color:#3d3d3d">0</span>
<span class="t" style="left:1223.00px;top:924.68px;font-size:15.5px;line-height:15.5px;letter-spacing:0.000px;color:#3d3d3d">0</span>
<span class="t" style="left:1337.10px;top:924.68px;font-size:15.5px;line-height:15.5px;letter-spacing:-0.147px;color:#3d3d3d;transform:scaleX(0.9300);transform-origin:0 0">0%</span>
<span class="t" style="left:207.69px;top:962.58px;font-size:15.5px;line-height:15.5px;letter-spacing:0.000px;color:#3d3d3d;transform:scaleX(1.0648);transform-origin:0 0">Naomi Ong</span>
<span class="t" style="left:471.75px;top:962.58px;font-size:15.5px;line-height:15.5px;letter-spacing:0.000px;color:#3d3d3d;transform:scaleX(1.0728);transform-origin:0 0">Creative</span>
<span class="t" style="left:696.55px;top:962.58px;font-size:15.5px;line-height:15.5px;letter-spacing:0.000px;color:#3d3d3d;transform:scaleX(1.0974);transform-origin:0 0">496</span>
<span class="t" style="left:778.65px;top:962.58px;font-size:15.5px;line-height:15.5px;letter-spacing:0.000px;color:#3d3d3d;transform:scaleX(1.0922);transform-origin:0 0">314.98</span>
<span class="t" style="left:884.40px;top:962.58px;font-size:15.5px;line-height:15.5px;letter-spacing:0.000px;color:#3d3d3d;transform:scaleX(1.0922);transform-origin:0 0">283.48</span>
<span class="t" style="left:1009.60px;top:962.58px;font-size:15.5px;line-height:15.5px;letter-spacing:-0.000px;color:#3d3d3d;transform:scaleX(1.0796);transform-origin:0 0">31.5</span>
<span class="t" style="left:1117.25px;top:962.58px;font-size:15.5px;line-height:15.5px;letter-spacing:0.000px;color:#3d3d3d">0</span>
<span class="t" style="left:1200.35px;top:962.58px;font-size:15.5px;line-height:15.5px;letter-spacing:0.000px;color:#3d3d3d;transform:scaleX(1.0627);transform-origin:0 0">7.75</span>
<span class="t" style="left:1327.50px;top:962.58px;font-size:15.5px;line-height:15.5px;letter-spacing:0.000px;color:#3d3d3d;transform:scaleX(0.9763);transform-origin:0 0">64%</span>
</body></html>
